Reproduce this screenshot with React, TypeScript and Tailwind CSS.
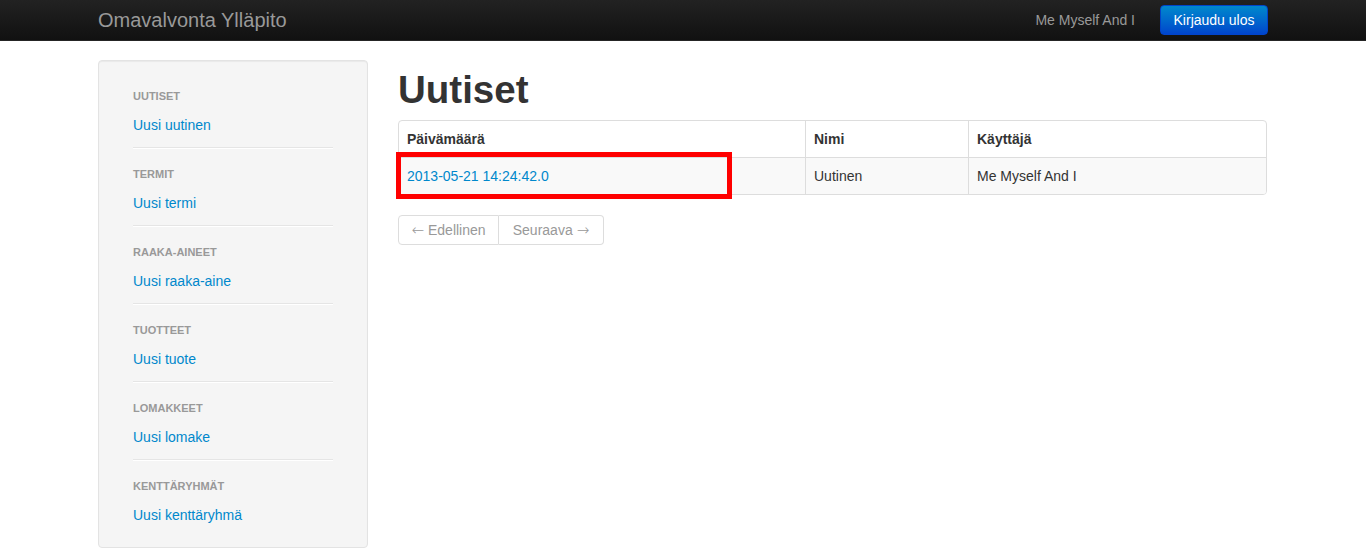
import React from "react";

const sections = [
  { h: "Uutiset", l: "Uusi uutinen" },
  { h: "Termit", l: "Uusi termi" },
  { h: "Raaka-aineet", l: "Uusi raaka-aine" },
  { h: "Tuotteet", l: "Uusi tuote" },
  { h: "Lomakkeet", l: "Uusi lomake" },
  { h: "Kenttäryhmät", l: "Uusi kenttäryhmä" },
];

export default function App() {
  return (
    <div className="min-h-[560px] bg-white text-[14px] leading-[20px] text-[#333]" style={{ fontFamily: '"Liberation Sans", Arial, sans-serif' }}>
      <div className="h-[41px] border-b border-[#252525] bg-gradient-to-b from-[#222222] to-[#111111]">
        <div className="mx-auto flex h-[40px] w-[1170px] items-center">
          <div className="text-[20px] leading-[20px] text-[#999999]">Omavalvonta Ylläpito</div>
          <div className="ml-auto text-[14px] text-[#999999]">Me Myself And I</div>
          <button className="ml-[25px] h-[30px] w-[108px] rounded-[4px] border border-[#0044cc] bg-gradient-to-b from-[#0088cc] to-[#0044cc] text-[14px] text-white">
            Kirjaudu ulos
          </button>
        </div>
      </div>

      <div className="mx-auto mt-[19px] flex w-[1170px] items-start gap-[30px]">
        <div className="w-[270px] rounded-[4px] border border-[#e3e3e3] bg-[#f5f5f5] px-[34px] pb-[22px] pt-[25px] shadow-[inset_0_1px_1px_rgba(0,0,0,0.05)]">
          {sections.map((s, i) => (
            <div key={s.h}>
              <div className="h-[20px] text-[11px] font-bold uppercase leading-[20px] text-[#999999]">{s.h}</div>
              <div className="mt-[9px] h-[20px] text-[14px] leading-[20px] text-[#0088cc]">{s.l}</div>
              {i < sections.length - 1 && (
                <div className="mb-[15px] mt-[12px] h-[2px] border-b border-white bg-[#e5e5e5]" />
              )}
            </div>
          ))}
        </div>

        <div className="relative w-[870px]">
          <h1 className="mt-[10px] mb-[10px] text-[38.5px] font-bold leading-[40px] text-[#333]">Uutiset</h1>
          <div className="w-[869px] overflow-hidden rounded-[4px] border border-[#dddddd]">
            <div className="flex">
              <div className="w-[406px] p-[8px] font-bold">Päivämäärä</div>
              <div className="w-[163px] border-l border-[#dddddd] p-[8px] font-bold">Nimi</div>
              <div className="flex-1 border-l border-[#dddddd] p-[8px] font-bold">Käyttäjä</div>
            </div>
            <div className="flex border-t border-[#dddddd] bg-[#f9f9f9]">
              <div className="w-[406px] p-[8px] text-[#0088cc]">2013-05-21 14:24:42.0</div>
              <div className="w-[163px] border-l border-[#dddddd] p-[8px]">Uutinen</div>
              <div className="flex-1 border-l border-[#dddddd] p-[8px]">Me Myself And I</div>
            </div>
          </div>
          <div className="absolute left-[-2px] top-[92px] h-[47px] w-[336px] border-[5px] border-[#ff0000]" />

          <div className="mt-[20px] flex">
            <div className="flex h-[30px] w-[101px] items-center justify-center gap-[4px] rounded-l-[4px] border border-[#dddddd] text-[#999999]">
              <span style={{ fontFamily: '"DejaVu Sans", sans-serif' }} className="text-[15px] font-extralight">←</span>
              <span>Edellinen</span>
            </div>
            <div className="flex h-[30px] w-[105px] items-center justify-center gap-[4px] rounded-r-[4px] border border-l-0 border-[#dddddd] text-[#999999]">
              <span>Seuraava</span>
              <span style={{ fontFamily: '"DejaVu Sans", sans-serif' }} className="text-[15px] font-extralight">→</span>
            </div>
          </div>
        </div>
      </div>
    </div>
  );
}
